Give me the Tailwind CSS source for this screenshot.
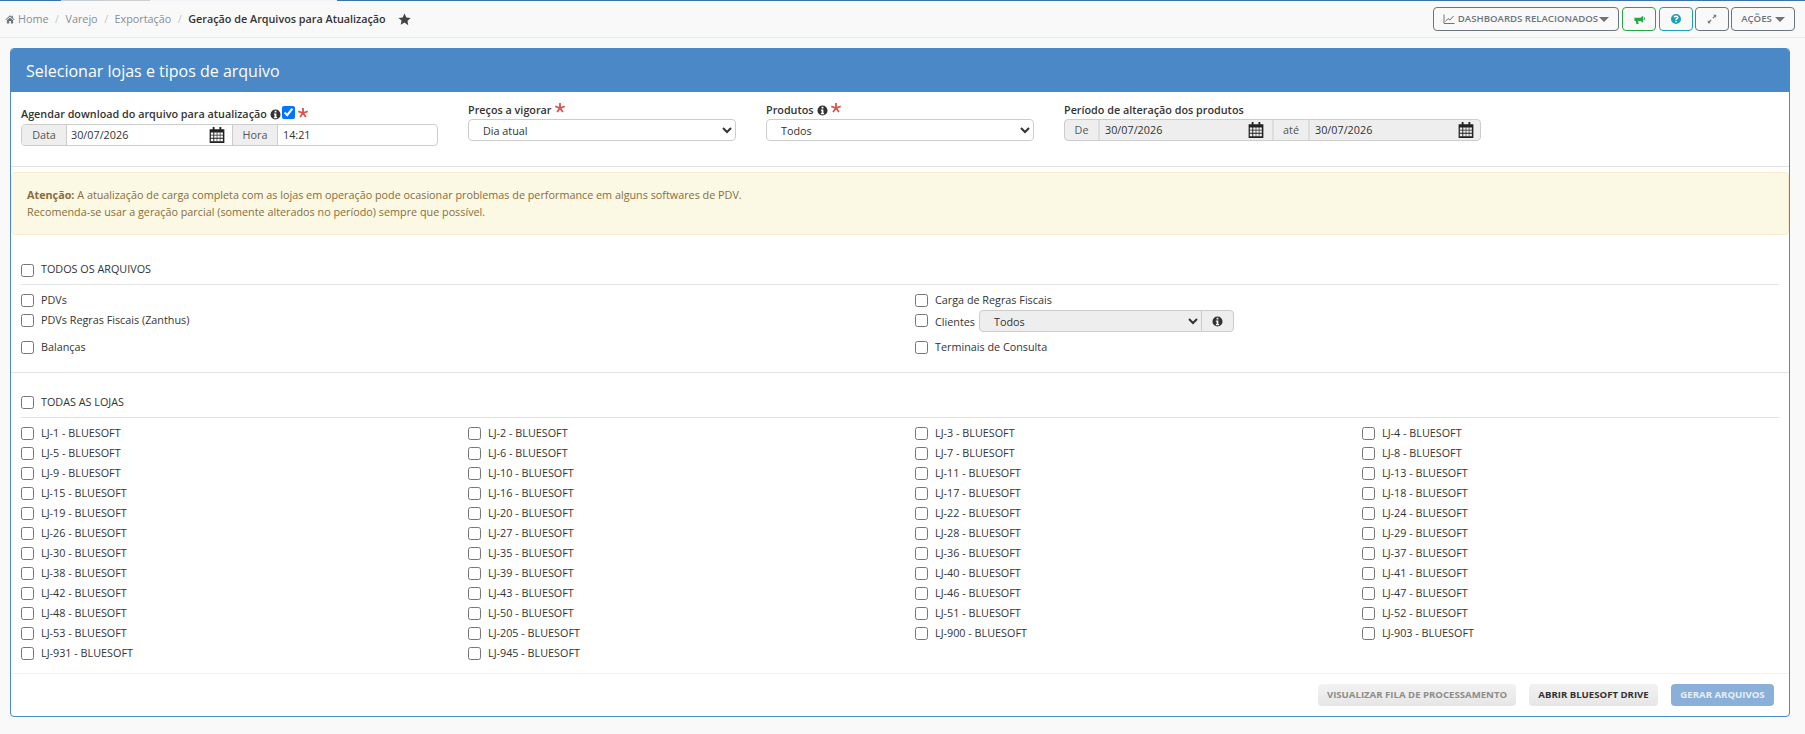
<!DOCTYPE html>
<html lang="en">
<head>
    <meta charset="UTF-8">
    <title>Geração de Arquivos para Atualização</title>
    <script src="https://cdn.jsdelivr.net/npm/@tailwindcss/browser@4"></script>
</head>
<body class="bg-[#f9f9f9] text-[#333] font-['Open_Sans',sans-serif] text-[10.800px] h-[734px] overflow-hidden">
    <svg class="hidden">
        <symbol id="i-info" viewBox="0 0 24 24"><path fill="currentColor" fill-rule="evenodd" d="M12 1a11 11 0 1 0 0 22 11 11 0 0 0 0-22ZM10 4h4v3.500h-4ZM8.500 10h5.500v7.500h1.500V20h-7v-2.500H10v-5H8.500Z"/></symbol>
        <symbol id="i-cal" viewBox="0 0 26 26"><path fill="currentColor" fill-rule="evenodd" d="M6 0h3v3.500h8V0h3v3.500h5V26H1V3.500h5ZM3 9v3.500h4V9Zm5.500 0v3.500h4V9Zm5 0v3.500h4V9Zm5 0v3.500h4V9ZM3 14v3.500h4V14Zm5.500 0v3.500h4V14Zm5 0v3.500h4V14Zm5 0v3.500h4V14ZM3 19v4h4v-4Zm5.500 0v4h4v-4Zm5 0v4h4v-4Zm5 0v4h4v-4Z"/></symbol>
        <symbol id="i-req" viewBox="0 0 10 10"><path fill="none" stroke="#d9534f" stroke-width="1.800" d="M5 5V0M5 5 9.760 3.450M5 5 7.940 9.050M5 5 2.060 9.050M5 5 .24 3.450"/></symbol>
    </svg>

    <!-- barra superior -->
    <div class="h-px bg-[#3b74ab] flex pl-[61px]">
        <span class="w-[45px] bg-[#c4ccd4]"></span>
        <span class="w-[44px] bg-[#cfcfcf]"></span>
        <span class="w-[187px] bg-[#f0f4f8]"></span>
    </div>
    <header class="h-[37px] flex items-center justify-between pl-[5px] pr-[10px] border-b border-[#e9e9e9]">
        <nav class="flex items-center text-[#868e96]">
            <svg class="w-[10px] h-[10px] mr-[3px] text-[#6c757d]" viewBox="0 0 24 24"><path fill="currentColor" d="M12 3 1 13l1.500 1.500L12 6l9.500 8.500L23 13l-4-3.600V4h-3v2.700ZM4.500 15v8H10v-6h4v6h5.500v-8L12 8.500Z"/></svg>
            <a href="#">Home</a>
            <span class="mx-[6.500px] text-[#c2c7cc]">/</span>
            <a href="#">Varejo</a>
            <span class="mx-[6.500px] text-[#c2c7cc]">/</span>
            <a href="#">Exportação</a>
            <span class="mx-[6.500px] text-[#c2c7cc]">/</span>
            <span class="font-semibold text-[#333]">Geração de Arquivos para Atualização</span>
            <svg class="w-[13px] h-[13px] ml-[12px] text-[#444]" viewBox="0 0 24 24"><path fill="currentColor" d="m12 1 3.400 7.200 7.900 1-5.800 5.500 1.500 7.800L12 17.700l-7 3.800 1.500-7.800L.7 9.200l7.900-1Z"/></svg>
        </nav>
        <div class="flex gap-[2px] text-[9.600px] font-semibold text-[#6c757d]">
            <button class="h-[24px] w-[186px] mr-px border border-[#6c757d] rounded-[4px] flex items-center justify-center">
                <svg class="w-[12px] h-[12px] mr-[3px]" viewBox="0 0 24 24"><path fill="none" stroke="currentColor" stroke-width="2" d="M2 3v18h21M5 17l5-6 4 3 7-8"/></svg>
                DASHBOARDS RELACIONADOS<span class="ml-px border-x-[5px] border-t-[5px] border-x-transparent border-t-[#6c757d]"></span>
            </button>
            <button class="h-[24px] w-[34px] mr-px border border-[#28a745] rounded-[4px] flex items-center justify-center text-[#28a745]">
                <svg class="w-[11px] h-[11px]" viewBox="0 0 24 24"><path fill="currentColor" d="M1 8h13l6-4v15l-6-4H9l1 7H5l-1-7H1Z"/><path fill="none" stroke="currentColor" stroke-width="2" d="M21 8h2v4h-2"/></svg>
            </button>
            <button class="h-[24px] w-[34px] border border-[#17a2b8] rounded-[4px] flex items-center justify-center text-[#17a2b8]">
                <svg class="w-[10px] h-[10px]" viewBox="0 0 24 24"><path fill="currentColor" fill-rule="evenodd" d="M12 0a12 12 0 1 0 0 24 12 12 0 0 0 0-24Zm-1.800 17h3.600v3h-3.600ZM12 3.500c3.500 0 6 2 6 4.800 0 2.300-1.300 3.300-2.800 4.300-.9.600-1.400 1-1.400 2.400h-3.600c0-2.600 1.100-3.700 2.700-4.800 1-.7 1.500-1 1.500-1.800s-.8-1.500-2.200-1.500c-1.300 0-2.300.7-3 1.800L6 6.700C7.300 4.700 9.300 3.500 12 3.500Z"/></svg>
            </button>
            <button class="h-[24px] w-[34px] border border-[#6c757d] rounded-[4px] flex items-center justify-center">
                <svg class="w-[10px] h-[10px]" viewBox="0 0 24 24"><path fill="currentColor" d="M15 2h7v7l-2.500-2.500-4.500 4.500-2-2 4.500-4.500ZM9 22H2v-7l2.500 2.500 4.500-4.500 2 2-4.500 4.500Z"/></svg>
            </button>
            <button class="h-[24px] w-[64px] border border-[#6c757d] rounded-[4px] flex items-center justify-center">
                AÇÕES<span class="ml-[3px] border-x-[5px] border-t-[5px] border-x-transparent border-t-[#6c757d]"></span>
            </button>
        </div>
    </header>

    <main class="mx-[10px] mt-[10px] w-[1780px] h-[669px] bg-white border border-[#4a88c7] rounded-[4px] overflow-hidden">
        <h2 class="h-[43px] bg-[#4a88c7] text-white text-[16px] flex items-center pl-[15px]">Selecionar lojas e tipos de arquivo</h2>

        <section class="h-[75px] border-b border-[#e2e2e2] flex pl-[10px]">
            <div class="w-[447px] pt-[13px]">
                <div class="flex items-center h-[18px] font-semibold">
                    Agendar download do arquivo para atualização
                    <svg class="w-[11px] h-[11px] ml-[3px] text-[#333]"><use href="#i-info"/></svg>
                    <input type="checkbox" checked class="ml-px mb-[4px]">
                    <svg class="w-[10px] h-[10px] ml-[3px] mb-[2px]"><use href="#i-req"/></svg>
                </div>
                <div class="flex w-[417px] h-[22px] mt-px border border-[#ccc] rounded-[4px] overflow-hidden">
                    <span class="w-[45px] bg-[#eee] border-r border-[#ccc] flex items-center justify-center text-[#555]">Data</span>
                    <span class="w-[165px] pl-[4px] pr-[7px] flex items-center justify-between">30/07/2026<svg class="w-[16px] h-[16px] text-[#222]"><use href="#i-cal"/></svg></span>
                    <span class="w-[46px] bg-[#eee] border-x border-[#ccc] flex items-center justify-center text-[#555]">Hora</span>
                    <span class="pl-[5px] flex items-center">14:21</span>
                </div>
            </div>
            <div class="w-[298px] pt-[9px]">
                <label class="flex items-center h-[18px] font-semibold">Preços a vigorar<svg class="w-[10px] h-[10px] ml-[3px] mb-[4px]"><use href="#i-req"/></svg></label>
                <select class="block w-[268px] h-[22px] pl-[10px] pr-[3px] bg-white border border-[#ccc] rounded-[4px] text-[10.800px]"><option>Dia atual</option></select>
            </div>
            <div class="w-[298px] pt-[9px]">
                <label class="flex items-center h-[18px] font-semibold">Produtos
                    <svg class="w-[11px] h-[11px] ml-[3px] text-[#333]"><use href="#i-info"/></svg>
                    <svg class="w-[10px] h-[10px] ml-[3px] mb-[4px]"><use href="#i-req"/></svg></label>
                <select class="block w-[268px] h-[22px] pl-[10px] pr-[3px] bg-white border border-[#ccc] rounded-[4px] text-[10.800px]"><option>Todos</option></select>
            </div>
            <div class="pt-[9px]">
                <label class="flex items-center h-[18px] font-semibold">Período de alteração dos produtos</label>
                <div class="flex w-[417px] h-[22px] border border-[#ccc] rounded-[4px] overflow-hidden bg-[#eee]">
                    <span class="w-[35px] border-r-2 border-[#ddd] flex items-center justify-center text-[#555]">De</span>
                    <span class="w-[172px] pl-[5px] pr-[8px] flex items-center justify-between">30/07/2026<svg class="w-[16px] h-[16px] text-[#222]"><use href="#i-cal"/></svg></span>
                    <span class="w-[38px] border-x-2 border-[#ddd] flex items-center justify-center text-[#555]">até</span>
                    <span class="flex-1 pl-[5px] pr-[6px] flex items-center justify-between">30/07/2026<svg class="w-[16px] h-[16px] text-[#222]"><use href="#i-cal"/></svg></span>
                </div>
            </div>
        </section>

        <div class="mt-[5px] h-[63px] bg-[#fbf8e3] border border-[#faebcc] rounded-[4px] text-[#8a6d3b] pl-[15px] pt-[14px] leading-[16.500px]">
            <p><b class="font-bold">Atenção:</b> A atualização de carga completa com as lojas em operação pode ocasionar problemas de performance em alguns softwares de PDV.</p>
            <p>Recomenda-se usar a geração parcial (somente alterados no período) sempre que possível.</p>
        </div>

        <section class="h-[138px] border-b border-[#e2e2e2] px-[10px] pt-[25px]">
            <label class="flex items-center h-[20px]"><input type="checkbox" class="mr-[7px]"><span class="mb-[2px]">TODOS OS ARQUIVOS</span></label>
            <div class="mt-[4px] border-t border-[#e2e2e2] grid grid-cols-[894px_1fr] pt-[5px]">
                <label class="flex items-center h-[20px]"><input type="checkbox" class="mr-[7px]">PDVs</label>
                <label class="flex items-center h-[20px]"><input type="checkbox" class="mr-[7px]">Carga de Regras Fiscais</label>
                <label class="flex items-center h-[20px]"><input type="checkbox" class="mr-[7px]">PDVs Regras Fiscais (Zanthus)</label>
                <div class="flex items-center h-[20px]">
                    <input type="checkbox" class="mr-[7px]">
                    <span class="mt-[5px] mr-[4px]">Clientes</span>
                    <div class="flex w-[255px] h-[22px] mt-[2px] border border-[#ccc] rounded-[4px] overflow-hidden bg-[#eee]">
                        <select disabled class="flex-1 pl-[10px] pr-[3px] text-[10.800px] text-[#333] opacity-100"><option>Todos</option></select>
                        <span class="w-[32px] border-l border-[#ccc] flex items-center justify-center"><svg class="w-[11px] h-[11px]"><use href="#i-info"/></svg></span>
                    </div>
                </div>
                <label class="flex items-center h-[20px] mt-[7px]"><input type="checkbox" class="mr-[7px]">Balanças</label>
                <label class="flex items-center h-[20px] mt-[7px]"><input type="checkbox" class="mr-[7px]">Terminais de Consulta</label>
            </div>
        </section>

        <section class="px-[10px] pt-[19px]">
            <label class="flex items-center h-[20px]"><input type="checkbox" class="mr-[7px]">TODAS AS LOJAS</label>
            <div id="lojas" class="mt-[5px] border-t border-[#e2e2e2] grid grid-cols-[repeat(4,447px)] w-[1758px] pt-[5px]"></div>
        </section>

        <footer class="mt-[10px] border-t border-[#f1f1f5] h-[43px] flex justify-end items-start gap-[13px] pt-[10px] pr-[15px] text-[9.600px] font-bold">
            <button class="h-[22px] w-[198px] rounded-[4px] bg-gradient-to-b from-[#f2f2f2] to-[#e6e6e6] text-[#8d8d8d]">VISUALIZAR FILA DE PROCESSAMENTO</button>
            <button class="h-[22px] w-[129px] rounded-[4px] bg-gradient-to-b from-[#f2f2f2] to-[#e6e6e6] text-[#333]">ABRIR BLUESOFT DRIVE</button>
            <button class="h-[22px] w-[103px] rounded-[4px] bg-[#8ab0d9] text-white/80">GERAR ARQUIVOS</button>
        </footer>
    </main>

    <script>
        // lista de lojas
        var lojas = [1,2,3,4,5,6,7,8,9,10,11,13,15,16,17,18,19,20,22,24,26,27,28,29,30,35,36,37,38,39,40,41,42,43,46,47,48,50,51,52,53,205,900,903,931,945];
        document.getElementById("lojas").innerHTML = lojas.map(function (n) {
            return '<label class="flex items-center h-[20px]"><input type="checkbox" class="mr-[7px]">LJ-' + n + ' - BLUESOFT</label>';
        }).join("");
    </script>
</body>
</html>
